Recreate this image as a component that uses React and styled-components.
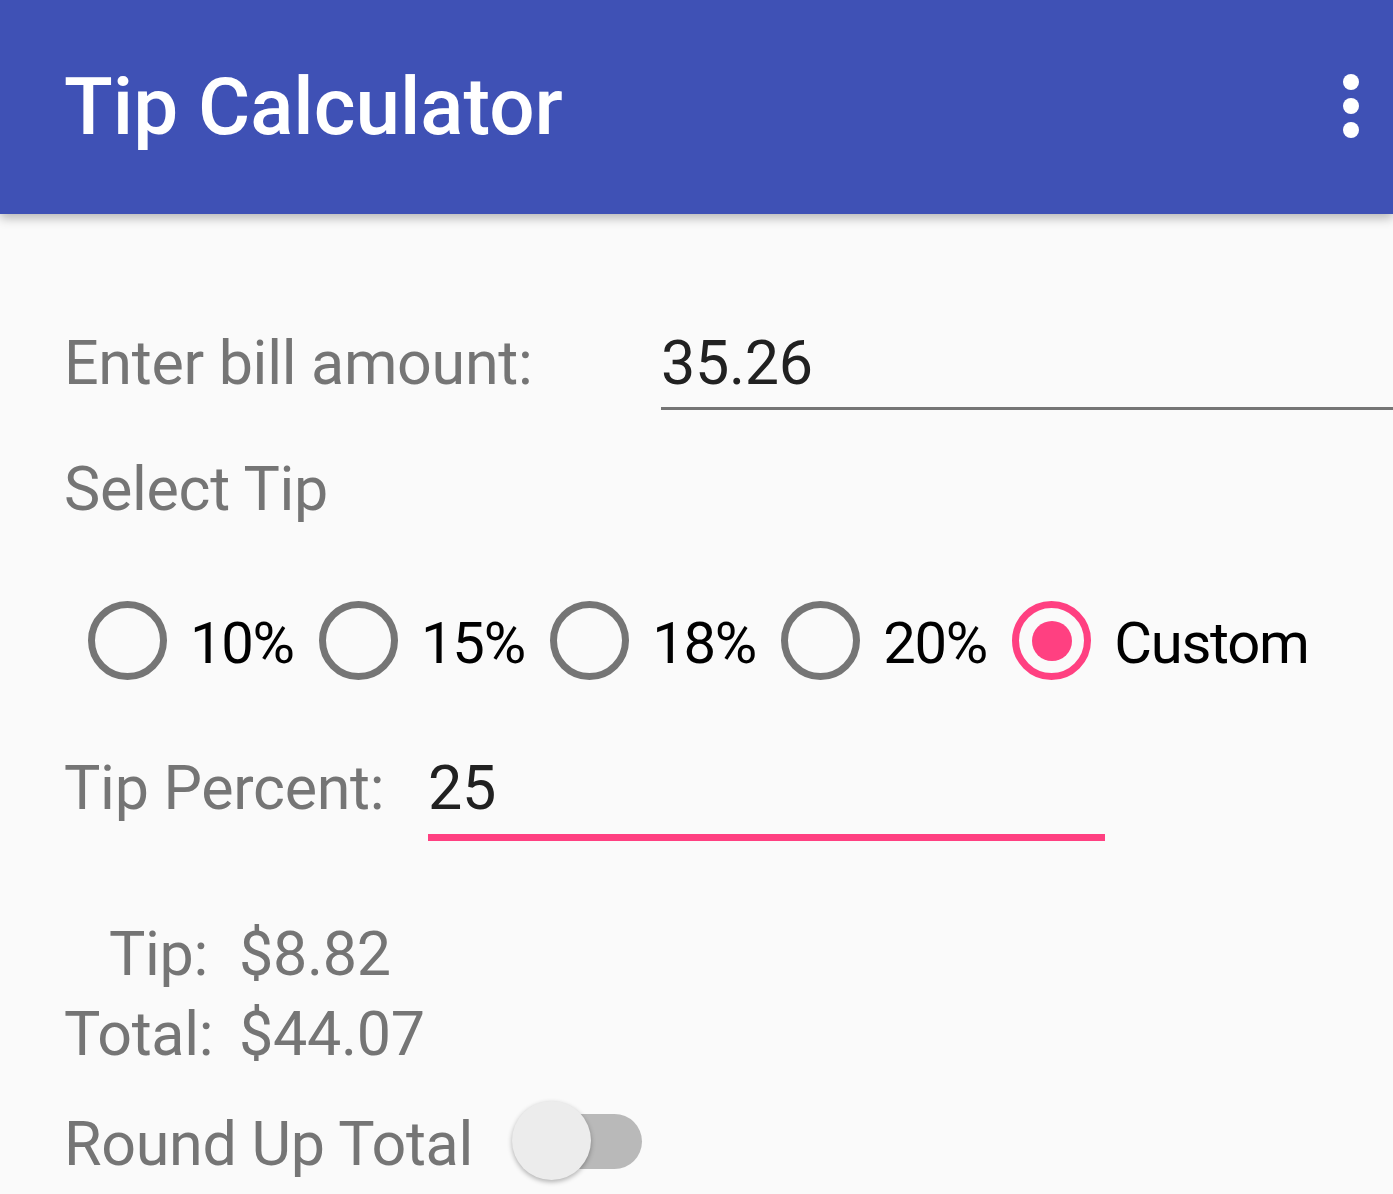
import React from 'react'
import styled, { createGlobalStyle } from 'styled-components'

const GlobalStyle = createGlobalStyle`
  html, body {
    margin: 0;
    padding: 0;
    background: #fafafa;
    font-family: Roboto, "Noto Sans", sans-serif;
  }
`

const TIPS = ['10%', '15%', '18%', '20%', 'Custom']

const Screen = styled.div`
  width: 1393px;
  height: 1194px;
  overflow: hidden;
  background: #fafafa;
`

const Toolbar = styled.div`
  height: 214px;
  background: #3f51b5;
  display: flex;
  align-items: center;
  justify-content: space-between;
  padding: 0 23px 0 64px;
  box-sizing: border-box;
  box-shadow: 0 4px 10px rgba(0, 0, 0, 0.28);
  position: relative;
  z-index: 1;
`

const Title = styled.div`
  color: #fff;
  font-size: 80px;
  font-weight: 500;
`

const Kebab = styled.svg`
  width: 30px;
  height: 80px;
`

const Content = styled.div`
  padding-left: 64px;
`

const FieldRow = styled.div`
  display: flex;
  align-items: flex-end;
  margin-top: ${props => props.top}px;
`

const Label = styled.div`
  width: ${props => props.width ? props.width + 'px' : 'auto'};
  flex-shrink: 0;
  font-size: 61px;
  line-height: 73px;
  letter-spacing: -0.3px;
  color: #757575;
  padding-bottom: ${props => props.pad || 0}px;
`

const Field = styled.div`
  width: ${props => props.width ? props.width + 'px' : 'auto'};
  flex: ${props => props.width ? 'none' : 1};
  font-size: 61px;
  line-height: 73px;
  letter-spacing: -0.3px;
  color: #212121;
  padding-bottom: ${props => props.active ? 9 : 7}px;
  border-bottom: ${props => props.active ? '7px solid #ff4081' : '3px solid #757575'};
`

const SectionTitle = styled.div`
  margin-top: 43px;
  font-size: 61px;
  line-height: 73px;
  letter-spacing: -0.3px;
  color: #757575;
`

const RadioGroup = styled.div`
  display: flex;
  align-items: center;
  gap: 2.3px;
  height: 125px;
  margin-top: 52px;
  padding-left: 1px;
`

const RadioItem = styled.div`
  display: flex;
  align-items: center;
`

const RadioBox = styled.div`
  width: 125px;
  height: 125px;
  display: flex;
  align-items: center;
  justify-content: center;
`

const RadioCircle = styled.div`
  width: 79px;
  height: 79px;
  box-sizing: border-box;
  border-radius: 50%;
  border: 7px solid ${props => props.checked ? '#ff4081' : '#757575'};
  display: flex;
  align-items: center;
  justify-content: center;

  &::after {
    content: '';
    display: ${props => props.checked ? 'block' : 'none'};
    width: 40px;
    height: 40px;
    border-radius: 50%;
    background: #ff4081;
  }
`

const RadioLabel = styled.span`
  font-size: 58px;
  line-height: 70px;
  letter-spacing: -1.3px;
  color: #000;
  position: relative;
  top: 2px;
`

const Results = styled.div`
  display: grid;
  grid-template-columns: 144px auto;
  column-gap: 31px;
  margin-top: 73px;
  font-size: 61px;
  line-height: 80px;
  letter-spacing: -0.3px;
  color: #757575;
`

const ResultLabel = styled.div`
  text-align: right;
`

const SwitchRow = styled.div`
  display: flex;
  align-items: center;
  height: 80px;
  margin-top: 27px;
`

const SwitchLabel = styled.div`
  font-size: 61px;
  line-height: 80px;
  letter-spacing: -0.3px;
  color: #757575;
  position: relative;
  top: 3px;
`

const Switch = styled.div`
  position: relative;
  width: 130px;
  height: 80px;
  margin-left: 39px;
  display: flex;
  align-items: center;
  justify-content: flex-end;
`

const Track = styled.div`
  width: 104px;
  height: 55px;
  border-radius: 28px;
  background: #b9b9b9;
`

const Thumb = styled.div`
  position: absolute;
  left: 0;
  top: 0;
  width: 79px;
  height: 79px;
  border-radius: 50%;
  background: #ececec;
  box-shadow: 0 2px 5px rgba(0, 0, 0, 0.3);
`

export default function App () {
  return (
    <Screen>
      <GlobalStyle />
      <Toolbar>
        <Title>Tip Calculator</Title>
        <Kebab viewBox='0 0 30 80'>
          <circle cx='11' cy='15' r='8' fill='#fff' />
          <circle cx='11' cy='39' r='8' fill='#fff' />
          <circle cx='11' cy='63' r='8' fill='#fff' />
        </Kebab>
      </Toolbar>

      <Content>
        <FieldRow top={113}>
          <Label width={597} pad={10}>Enter bill amount:</Label>
          <Field>35.26</Field>
        </FieldRow>

        <SectionTitle>Select Tip</SectionTitle>

        <RadioGroup>
          {TIPS.map(tip => (
            <RadioItem key={tip}>
              <RadioBox>
                <RadioCircle checked={tip === 'Custom'} />
              </RadioBox>
              <RadioLabel>{tip}</RadioLabel>
            </RadioItem>
          ))}
        </RadioGroup>

        <FieldRow top={49}>
          <Label width={364} pad={16}>Tip Percent:</Label>
          <Field width={677} active>25</Field>
        </FieldRow>

        <Results>
          <ResultLabel>Tip:</ResultLabel>
          <div>$8.82</div>
          <ResultLabel>Total:</ResultLabel>
          <div>$44.07</div>
        </Results>

        <SwitchRow>
          <SwitchLabel>Round Up Total</SwitchLabel>
          <Switch>
            <Track />
            <Thumb />
          </Switch>
        </SwitchRow>
      </Content>
    </Screen>
  )
}
